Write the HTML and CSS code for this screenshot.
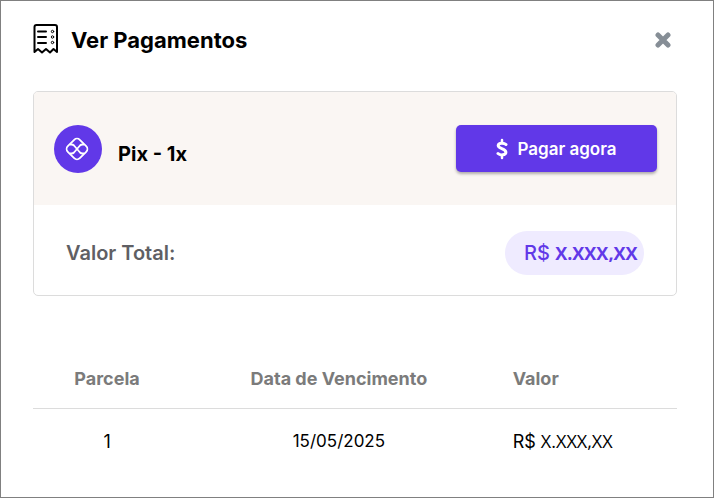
FILE: index.html
```html
<!DOCTYPE html>
<html lang="pt-BR">
<head>
    <meta charset="UTF-8">
    <meta name="viewport" content="width=device-width, initial-scale=1.0">
    <title>Ver Pagamentos</title>
    <link rel="stylesheet" href="styles.css">
</head>
<body>
    <div class="modal">
        <header class="modal-header">
            <svg class="receipt-icon" viewBox="0 0 26 32" width="26" height="32" fill="none" stroke="#000" stroke-width="2" stroke-linecap="round" stroke-linejoin="round">
                <path d="M1.500 29V4Q1.500 2 3.500 2H22Q24 2 24 4V29L20.500 26L17 29.500L13 26L9 29.500L5 26Z"/>
                <path d="M5 8.500H13M5 14H13M5 20H13"/>
                <g stroke-width="1">
                    <circle cx="19.500" cy="8.500" r="1.200"/>
                    <circle cx="19.500" cy="14" r="1.200"/>
                    <circle cx="19.500" cy="19.500" r="1.200"/>
                </g>
            </svg>
            <h1>Ver Pagamentos</h1>
            <button class="close-button" type="button" aria-label="Fechar">
                <svg viewBox="0 0 16 16" width="16" height="16" stroke="#868e96" stroke-width="5" stroke-linecap="round">
                    <path d="M3 3L13 13M13 3L3 13"/>
                </svg>
            </button>
        </header>

        <section class="card">
            <div class="card-header">
                <span class="pix-icon">
                    <svg viewBox="0 0 26 26" width="26" height="26" fill="none" stroke="#fff" stroke-width="1.800" stroke-linejoin="round">
                        <rect x="4.500" y="4.500" width="17" height="17" rx="4" transform="rotate(45 13 13)"/>
                        <path d="M6 8.500H7.500Q9 8.500 10 9.500L16 16.500Q17 17.500 18.500 17.500H20"/>
                        <path d="M6 17.500H7.500Q9 17.500 10 16.500L16 9.500Q17 8.500 18.500 8.500H20"/>
                    </svg>
                </span>
                <h2>Pix - 1x</h2>
                <button class="pay-button" type="button">
                    <svg viewBox="0 0 12 22" width="12" height="22" fill="none" stroke="#fff" stroke-width="3" stroke-linecap="round">
                        <path d="M10 6.500C8.500 5 2.500 4.300 2.200 7.500C2 10.800 10 10.400 9.900 14.200C9.800 17.500 4 17.500 2 15.500"/>
                        <path d="M6 2V4M6 18V20" stroke-width="2.500"/>
                    </svg>
                    Pagar agora
                </button>
            </div>
            <div class="card-body">
                <span class="total-label">Valor Total:</span>
                <span class="total-value">R$ <b>X.XXX,XX</b></span>
            </div>
        </section>

        <table class="installments">
            <thead>
                <tr>
                    <th class="col-number">Parcela</th>
                    <th class="col-date">Data de Vencimento</th>
                    <th class="col-value">Valor</th>
                </tr>
            </thead>
            <tbody>
                <tr>
                    <td>1</td>
                    <td class="date">15/05/2025</td>
                    <td class="col-value">R$ <span class="amount">X.XXX,XX</span></td>
                </tr>
            </tbody>
        </table>
    </div>
</body>
</html>
```
FILE: styles.css
```css
* {
    box-sizing: border-box;
}
body {
    margin: 0;
    font-family: Inter, "Liberation Sans", sans-serif;
    background-color: #fff;
    color: #000;
}
h1, h2 {
    margin: 0;
}
button {
    border: none;
    font-family: inherit;
    cursor: pointer;
}
.modal {
    min-height: 100vh;
    padding: 22px 36px 22px 32px;
    border: 1px solid #808080;
}
.modal-header {
    display: flex;
    align-items: center;
    height: 32px;
    margin-bottom: 36px;
}
h1 {
    margin-left: 12px;
    padding-top: 2px;
    font-size: 22px;
    font-weight: 700;
    line-height: 32px;
}
.close-button {
    display: flex;
    margin-left: auto;
    margin-right: 6px;
    padding: 2px 0 0;
    background: none;
}
.card {
    border: 1px solid #dcdcdc;
    border-radius: 5px;
    overflow: hidden;
}
.card-header {
    display: flex;
    align-items: center;
    height: 113px;
    padding: 0 19px 0 20px;
    background-color: #faf6f3;
}
.pix-icon {
    display: flex;
    align-items: center;
    justify-content: center;
    width: 48px;
    height: 48px;
    padding-right: 2px;
    border-radius: 50%;
    background-color: #6138e8;
}
h2 {
    margin-left: 16px;
    padding-top: 10px;
    font-size: 20px;
    font-weight: 700;
}
.pay-button {
    display: flex;
    align-items: center;
    justify-content: center;
    gap: 9px;
    width: 201px;
    height: 47px;
    margin-left: auto;
    border-radius: 5px;
    background-color: #6138e8;
    box-shadow: 0 2px 3px rgba(0, 0, 0, 0.3);
    color: #fff;
    font-size: 17px;
    font-weight: 600;
}
.card-body {
    display: flex;
    align-items: center;
    justify-content: space-between;
    height: 90px;
    padding: 6px 32px 0;
}
.total-label {
    color: #5f5f64;
    font-size: 20px;
    font-weight: 600;
}
.total-value {
    width: 139px;
    padding-left: 19px;
    border-radius: 22px;
    background-color: #efebff;
    color: #6138e8;
    font-size: 20px;
    font-weight: 500;
    line-height: 44px;
    white-space: nowrap;
}
.total-value b {
    font-family: "Open Sans", sans-serif;
    font-size: 18px;
    font-weight: 700;
}
.installments {
    width: 100%;
    margin-top: 52px;
    border-collapse: collapse;
    table-layout: fixed;
    font-size: 18px;
    text-align: center;
}
th {
    height: 60px;
    padding: 2px 0 0;
    border-bottom: 1px solid #dcdcdc;
    color: #7b7b7b;
    font-weight: 700;
}
td {
    height: 66px;
    padding: 0;
}
.col-number {
    width: 23%;
}
.col-date {
    width: 49%;
}
.col-value {
    padding-left: 16px;
    text-align: left;
}
.date {
    font-size: 17px;
}
.amount {
    font-family: "Open Sans", sans-serif;
}
```
